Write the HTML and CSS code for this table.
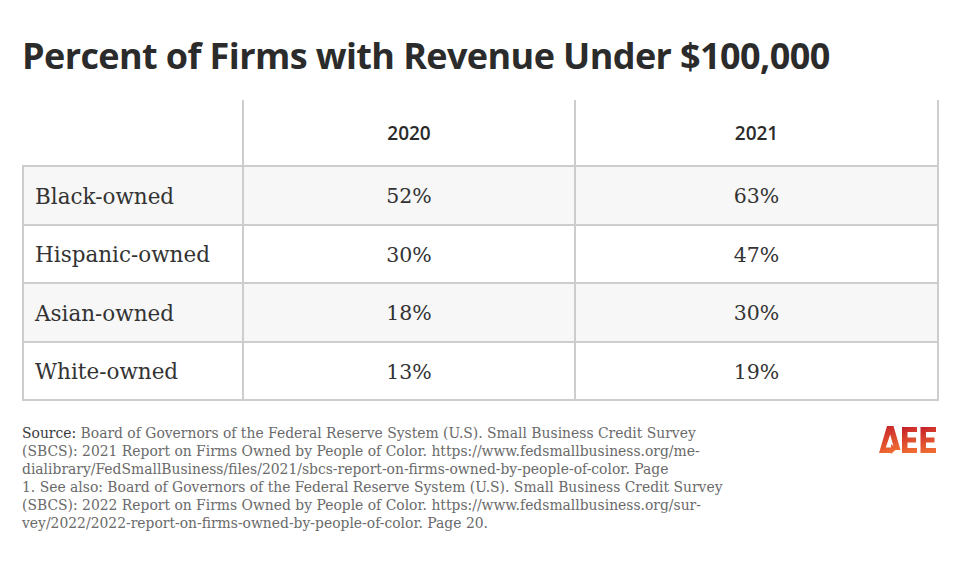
FILE: index.html
```html
<!DOCTYPE html>
<html lang="en">
<head>
<meta charset="utf-8">
<title>Percent of Firms with Revenue Under $100,000</title>
<link rel="stylesheet" href="styles.css">
</head>
<body>
<main class="page">
  <h1 class="title">Percent of Firms with Revenue Under $100,000</h1>
  <table class="data">
    <thead>
      <tr>
        <th class="corner"></th>
        <th class="year">2020</th>
        <th class="year last">2021</th>
      </tr>
    </thead>
    <tbody>
      <tr class="shade"><td class="label">Black-owned</td><td class="num">52%</td><td class="num">63%</td></tr>
      <tr><td class="label">Hispanic-owned</td><td class="num">30%</td><td class="num">47%</td></tr>
      <tr class="shade"><td class="label">Asian-owned</td><td class="num">18%</td><td class="num">30%</td></tr>
      <tr><td class="label">White-owned</td><td class="num">13%</td><td class="num">19%</td></tr>
    </tbody>
  </table>
  <footer class="foot">
    <p class="source"><span class="src-label">Source:</span> Board of Governors of the Federal Reserve System (U.S). Small Business Credit Survey<br>(SBCS): 2021 Report on Firms Owned by People of Color. https://www.fedsmallbusiness.org/me-<br>dialibrary/FedSmallBusiness/files/2021/sbcs-report-on-firms-owned-by-people-of-color. Page<br>1. See also: Board of Governors of the Federal Reserve System (U.S). Small Business Credit Survey<br>(SBCS): 2022 Report on Firms Owned by People of Color. https://www.fedsmallbusiness.org/sur-<br>vey/2022/2022-report-on-firms-owned-by-people-of-color. Page 20.</p>
    <svg class="logo" viewBox="0 0 58 28" width="58" height="28" aria-label="AEE">
      <defs>
        <linearGradient id="lg" x1="0" y1="0" x2="0.3" y2="1">
          <stop offset="0" stop-color="#c41e2a"/>
          <stop offset="1" stop-color="#ef6a32"/>
        </linearGradient>
      </defs>
      <path fill="url(#lg)" d="M0 27 L8 0 L14.5 0 L21.5 24 L15.5 24 L11.2 8.5 L6.8 21.5 L12 21.5 L12 18 L17.5 23 L12 28 L12 27 Z"/>
      <path fill="url(#lg)" d="M23 1 H38 V6 H28.5 V11.5 H37 V16.5 H28.5 V22 H38 V27 H23 Z"/>
      <path fill="url(#lg)" d="M41.5 1 H57 V6 H47 V11.5 H55.5 V16.5 H47 V22 H57 V27 H41.5 Z"/>
    </svg>
  </footer>
</main>
</body>
</html>
```

FILE: styles.css
```css
* { box-sizing: border-box; }

html, body {
  margin: 0;
  padding: 0;
  background: #ffffff;
}

.page {
  padding: 34px 23px 0 22px;
}

.title {
  margin: 0;
  font-family: "Open Sans", "Noto Sans", sans-serif;
  font-weight: 700;
  font-size: 36px;
  line-height: 44px;
  letter-spacing: -0.6px;
  color: #2b2b2b;
}

.data {
  margin-top: 22px;
  width: 915px;
  border-collapse: collapse;
  table-layout: fixed;
}

.data th,
.data td {
  border: 2px solid #cdcdcd;
  padding: 0;
}

.data .corner {
  width: 220px;
  border-top: none;
  border-left: none;
}

.data .year {
  width: 332px;
  height: 66px;
  border-top: none;
  font-family: "Open Sans", "Noto Sans", sans-serif;
  font-weight: 600;
  font-size: 19px;
  color: #2a2a2a;
  text-align: center;
  vertical-align: middle;
}

.data .year.last {
  width: 363px;
}

.data tbody tr {
  height: 58.5px;
}

.data tr.shade td {
  background: #f7f7f7;
}

.data .label {
  padding-left: 11px;
  padding-top: 2px;
  font-family: "DejaVu Serif", "Liberation Serif", serif;
  font-size: 21.5px;
  color: #333333;
  vertical-align: middle;
}

.data .num {
  text-align: center;
  padding-top: 2px;
  font-family: "DejaVu Serif", "Liberation Serif", serif;
  font-size: 20.5px;
  color: #333333;
  vertical-align: middle;
}

.foot {
  display: flex;
  justify-content: space-between;
  align-items: flex-start;
  margin-top: 23px;
}

.source {
  margin: 0;
  font-family: "DejaVu Serif", "Liberation Serif", serif;
  font-size: 13.9px;
  line-height: 18px;
  color: #6a6a6a;
  white-space: nowrap;
}

.src-label {
  color: #3a3a3a;
}

.logo {
  display: block;
  margin-top: 2px;
}
```
